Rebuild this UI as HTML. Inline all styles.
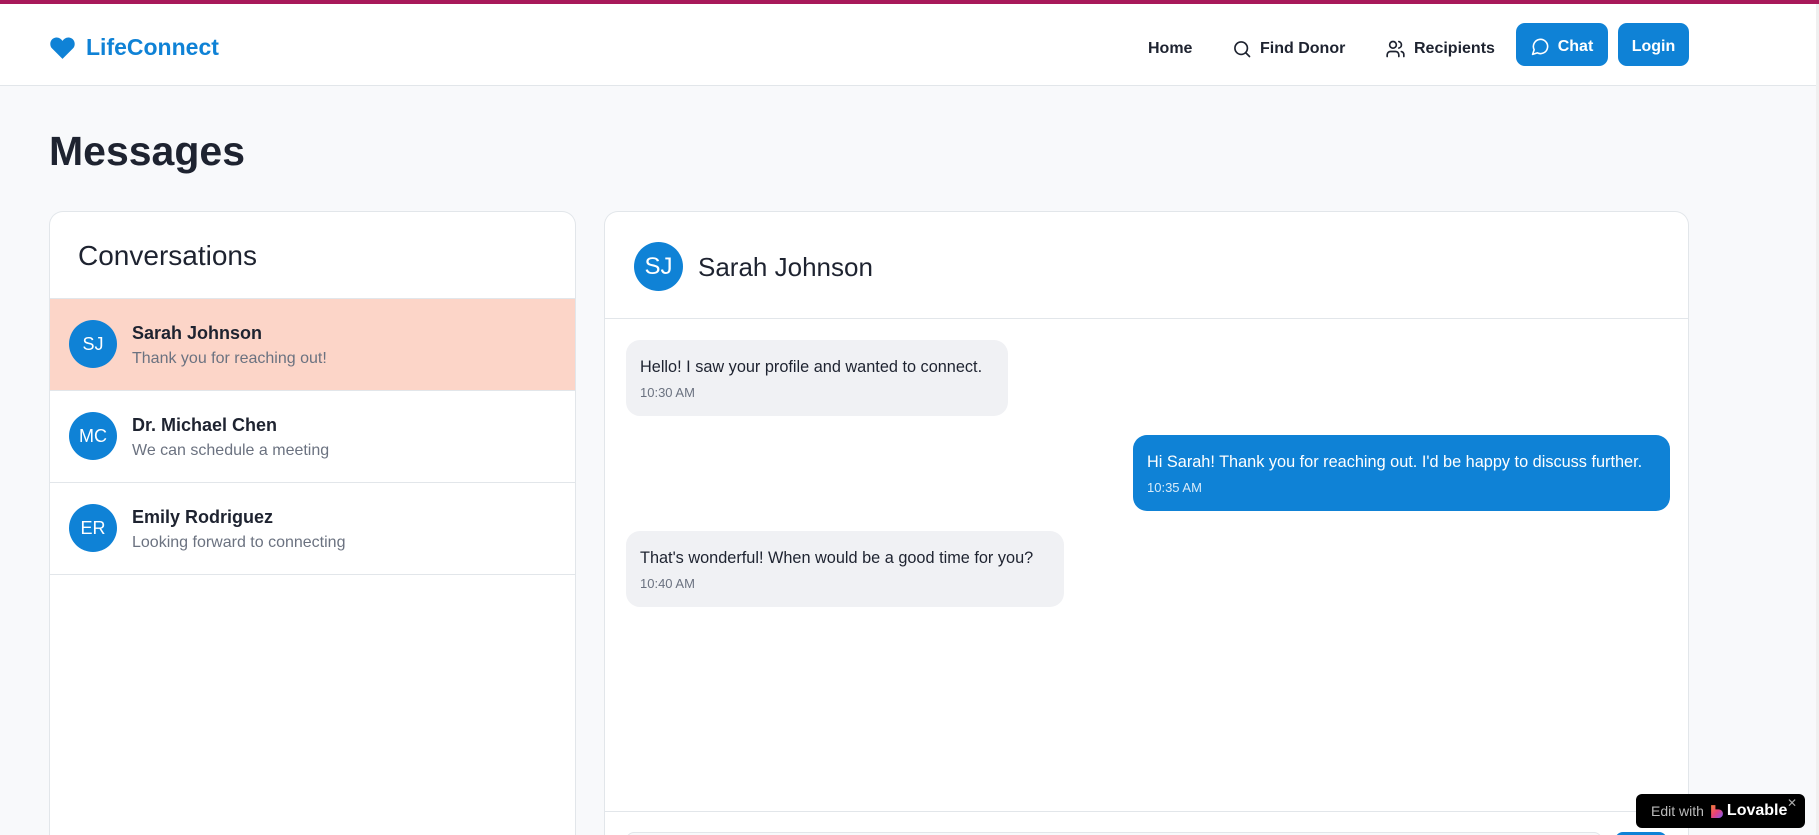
<!DOCTYPE html>
<html style="width:1819px;height:835px;overflow:hidden"><head><meta charset="utf-8"><style>
*{box-sizing:border-box;margin:0;padding:0}
body{width:1819px;height:835px;overflow:hidden;background:#f8f9fb;font-family:"Liberation Sans","DejaVu Sans",sans-serif;color:#1e2330;position:relative}
.topbar{position:absolute;left:0;top:0;width:1819px;height:4px;background:#a8195a}
header{position:absolute;left:0;top:4px;width:1816px;height:82px;background:#fff;border-bottom:1px solid #e2e6ea}
.logo{position:absolute;left:49px;top:30px;display:flex;align-items:center;color:#0f82d6;font-weight:bold;font-size:23px}
.logo svg{margin-right:10px}
.nav{position:absolute;top:23px;height:43px;display:flex;align-items:center;font-size:16px;font-weight:bold;color:#1e2330}
.nav svg{margin-right:8px}
.btn{position:absolute;top:19px;height:43px;background:#0f82d6;color:#fff;border-radius:9px;display:flex;align-items:center;justify-content:center;font-weight:bold;font-size:16px;padding-top:4px}
h1{position:absolute;left:49px;top:128px;font-size:41px;font-weight:bold;color:#1e2330}
.card{position:absolute;top:211px;background:#fff;border:1px solid #e2e6ea;border-bottom:none;border-radius:14px 14px 0 0;height:624px;overflow:hidden}
.row{position:absolute;left:0;width:100%;height:92px;border-bottom:1px solid #e2e6ea}
.av{position:absolute;width:48px;height:48px;border-radius:50%;background:#0f82d6;color:#fff;display:flex;align-items:center;justify-content:center;font-size:18px}
.nm{position:absolute;left:82px;top:24px;font-size:18px;font-weight:bold;color:#1e2330}
.sb{position:absolute;left:82px;top:51px;font-size:16px;color:#6b7280}
.bub{position:absolute;border-radius:14px;padding:18px 14px 0 14px;font-size:16.3px;height:76px}
.bub .t{font-size:13px;margin-top:8px;color:#6b7280}
</style></head><body>
<div class="topbar"></div>
<header>
<div class="logo"><svg width="27" height="24" viewBox="0 0 24 22"><path d="M12 21 L2.5 11.5 C-0.5 8.5 0.5 2.5 5.5 1.5 C8.5 1 10.5 2.5 12 4.5 C13.5 2.5 15.5 1 18.5 1.5 C23.5 2.5 24.5 8.5 21.5 11.5 Z" fill="#0f82d6"/></svg>LifeConnect</div>
<div class="nav" style="left:1148px">Home</div>
<div class="nav" style="left:1232px"><svg width="20" height="20" viewBox="0 0 24 24" fill="none" stroke="#1e2330" stroke-width="2" stroke-linecap="round"><circle cx="11" cy="11" r="7.5"/><path d="M16.5 16.5L21 21"/></svg>Find Donor</div>
<div class="nav" style="left:1385px"><svg width="21" height="20" viewBox="0 0 24 24" fill="none" stroke="#1e2330" stroke-width="2" stroke-linecap="round"><circle cx="9" cy="7" r="4"/><path d="M2 21v-2a4 4 0 0 1 4-4h6a4 4 0 0 1 4 4v2"/><path d="M16 3.1a4 4 0 0 1 0 7.8M22 21v-2a4 4 0 0 0-3-3.9"/></svg>Recipients</div>
<div class="btn" style="left:1516px;width:92px"><svg width="19" height="19" viewBox="0 0 24 24" fill="none" stroke="#fff" stroke-width="2" stroke-linejoin="round" style="margin-right:8px"><path d="M7.9 20A9 9 0 1 0 4 16.1L2 22Z"/></svg>Chat</div>
<div class="btn" style="left:1618px;width:71px">Login</div>
</header>
<h1>Messages</h1>

<div class="card" style="left:49px;width:527px">
<div style="position:absolute;left:28px;top:28px;font-size:28px;color:#1e2330">Conversations</div>
<div style="position:absolute;left:0;top:86px;width:100%;border-top:1px solid #e2e6ea"></div>
<div class="row" style="top:87px;background:#fcd5c8"><div class="av" style="left:19px;top:21px">SJ</div><div class="nm">Sarah Johnson</div><div class="sb">Thank you for reaching out!</div></div>
<div class="row" style="top:179px"><div class="av" style="left:19px;top:21px">MC</div><div class="nm">Dr. Michael Chen</div><div class="sb">We can schedule a meeting</div></div>
<div class="row" style="top:271px"><div class="av" style="left:19px;top:21px">ER</div><div class="nm">Emily Rodriguez</div><div class="sb">Looking forward to connecting</div></div>
</div>

<div class="card" style="left:604px;width:1085px">
<div class="av" style="left:29px;top:30px;width:49px;height:49px;font-size:24px">SJ</div>
<div style="position:absolute;left:93px;top:40px;font-size:26px">Sarah Johnson</div>
<div style="position:absolute;left:0;top:106px;width:100%;border-top:1px solid #e2e6ea"></div>
<div class="bub" style="left:21px;top:128px;width:382px;background:#f0f1f4">Hello! I saw your profile and wanted to connect.<div class="t">10:30 AM</div></div>
<div class="bub" style="left:528px;top:223px;width:537px;background:#0f82d6;color:#fff">Hi Sarah! Thank you for reaching out. I'd be happy to discuss further.<div class="t" style="color:#d8ebf9">10:35 AM</div></div>
<div class="bub" style="left:21px;top:319px;width:438px;background:#f0f1f4">That's wonderful! When would be a good time for you?<div class="t">10:40 AM</div></div>
<div style="position:absolute;left:0;top:599px;width:100%;border-top:1px solid #e2e6ea"></div>
<div style="position:absolute;left:21px;top:620px;width:976px;height:44px;border:1px solid #e2e6ea;border-radius:8px;background:#f8f9fb"></div>
<div style="position:absolute;left:1010px;top:620px;width:52px;height:44px;border-radius:8px;background:#0f82d6"></div>
</div>

<div style="position:absolute;left:1636px;top:794px;width:169px;height:34px;background:#000;border-radius:6px;color:#fff;font-size:14px;display:flex;align-items:center;padding-left:15px">
<span style="color:#bbb">Edit with</span>
<svg width="13" height="14" viewBox="0 0 12 13" style="margin:0 4px 0 6px"><defs><linearGradient id="g" x1="0" y1="0" x2="1" y2="1"><stop offset="0" stop-color="#f5803a"/><stop offset="0.5" stop-color="#e9417a"/><stop offset="1" stop-color="#7b5cf5"/></linearGradient></defs><path d="M1 1 H5 V5 H8 A4 4 0 0 1 8 13 H1 Z" fill="url(#g)"/></svg>
<b style="font-size:16px">Lovable</b>
<span style="position:absolute;right:8px;top:2px;color:#aaa;font-size:12px">✕</span>
</div>
<div style="position:absolute;left:1816px;top:4px;width:3px;height:831px;background:#f0f0f0"></div>
</body></html>
